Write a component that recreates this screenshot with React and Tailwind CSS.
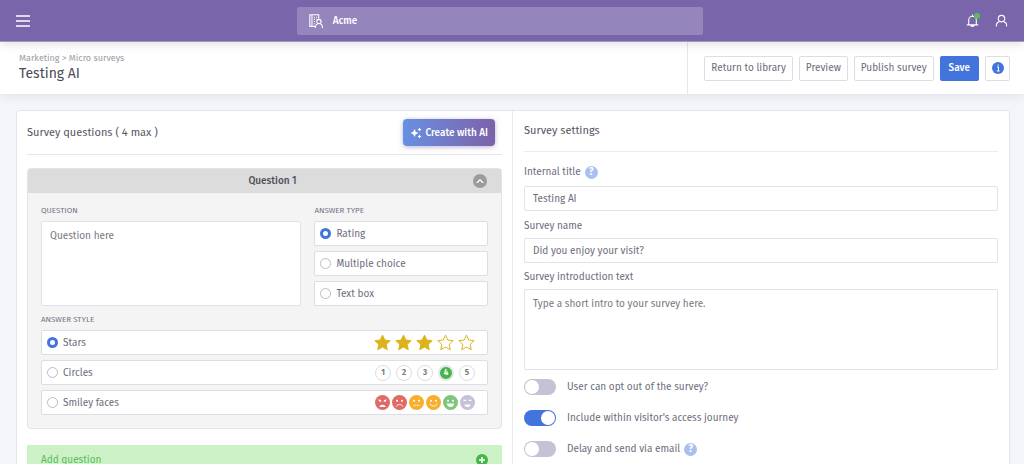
import React, { useState } from "react";

const ANSWER_TYPES = ["Rating", "Multiple choice", "Text box"];

const FACES = [
  { color: "#df6a66", kind: "angry" },
  { color: "#df6a66", kind: "sad" },
  { color: "#f6b02e", kind: "neutral" },
  { color: "#f6b02e", kind: "smile" },
  { color: "#7fc67b", kind: "grin" },
  { color: "#c5c2d8", kind: "love" },
];

function UserIcon({ className }) {
  return (
    <svg viewBox="0 0 24 24" fill="none" stroke="currentColor" strokeWidth="2" className={className}>
      <circle cx="12" cy="8.5" r="6" />
      <path d="M2.500 23v-2.500c0-3.500 2.500-5.500 6-6.500M21.500 23v-2.500c0-3.500-2.500-5.500-6-6.500" />
    </svg>
  );
}

function BellIcon() {
  return (
    <svg viewBox="0 0 24 24" fill="none" stroke="currentColor" strokeWidth="2" className="size-[13px]">
      <path d="M5 19V11a7 7 0 0 1 14 0v8M1.500 20h21M12 1v3" />
      <path d="M9 20.500a3 2.500 0 0 0 6 0" fill="currentColor" />
    </svg>
  );
}

function AccountIcon() {
  return (
    <svg viewBox="0 0 26 26" fill="none" stroke="currentColor" strokeWidth="2" className="size-[14px]">
      <path d="M18 9V1.500H1.500V23H11" />
      <path d="M5.500 2v21M9 6h2M13 6h2M9 10h2M13 10h1M9 14h2M9 18h2" />
      <circle cx="18.500" cy="14" r="4" />
      <path d="M12 26v-2.500c0-3 2-4.500 4-5.500M25 26v-2.500c0-3-2-4.500-4-5.500" />
    </svg>
  );
}

function SparklesIcon() {
  return (
    <svg viewBox="0 0 24 24" fill="currentColor" className="size-3">
      <path d="M9 4l2.500 5.500L17 12l-5.500 2.500L9 20l-2.500-5.500L1 12l5.500-2.500z" />
      <path d="M19 1l1.300 2.700L23 5l-2.700 1.300L19 9l-1.300-2.700L15 5l2.700-1.300z" />
      <path d="M19 15l1.300 2.700L23 19l-2.700 1.300L19 23l-1.300-2.700L15 19l2.700-1.300z" />
    </svg>
  );
}

function HelpIcon() {
  return (
    <button
      type="button"
      aria-label="Help"
      className="flex size-[13px] shrink-0 items-center justify-center rounded-full bg-[#a9bff0] text-[10px] leading-none font-bold text-white"
    >
      ?
    </button>
  );
}

function Star({ filled }) {
  return (
    <svg viewBox="0 0 24 24" fill={filled ? "#dcb31a" : "none"} stroke="#dcb31a" strokeWidth="1.4" className="size-[17px]">
      <path d="M12 1.500l3.200 7 7.600.9-5.600 5.200 1.500 7.600L12 18.400l-6.700 3.800 1.500-7.600L1.200 9.400l7.600-.9z" />
    </svg>
  );
}

function Stars() {
  return (
    <span className="flex gap-1">
      {[1, 2, 3, 4, 5].map((n) => (
        <Star key={n} filled={n <= 3} />
      ))}
    </span>
  );
}

function Circles() {
  return (
    <span className="flex gap-[5px]">
      {[1, 2, 3, 4, 5].map((n) => (
        <span
          key={n}
          className={
            n === 4
              ? "flex size-4 items-center justify-center rounded-full border-2 border-[#e6e6ea] bg-[#43b649] text-[8px] font-bold text-white"
              : "flex size-4 items-center justify-center rounded-full border border-[#dddde0] bg-white text-[8px] font-bold text-[#777]"
          }
        >
          {n}
        </span>
      ))}
    </span>
  );
}

function Face({ color, kind }) {
  return (
    <svg viewBox="0 0 24 24" fill="none" stroke="#fff" strokeWidth="1.6" strokeLinecap="round" className="size-[15px]">
      <circle cx="12" cy="12" r="12" fill={color} stroke="none" />
      {kind === "love" ? (
        <path d="M5 7.500h5.500c0 3-5.500 3-5.500 0zM13.500 7.500h5.500c0 3-5.500 3-5.500 0z" fill="#fff" stroke="none" />
      ) : (
        <g fill="#fff" stroke="none">
          <circle cx="8" cy="9" r="1.600" />
          <circle cx="16" cy="9" r="1.600" />
        </g>
      )}
      {kind === "angry" && (
        <>
          <path d="M6 8l3.500 1.500M18 8l-3.500 1.500" />
          <path d="M7 19c1-4.500 9-4.500 10 0z" fill="#fff" stroke="none" />
        </>
      )}
      {kind === "sad" && <path d="M7 18c2-4 8-4 10 0" />}
      {kind === "neutral" && <path d="M7.500 16.500h9" opacity="0.7" />}
      {kind === "smile" && <path d="M6.500 14.500c2 4.500 9 4.500 11 0" />}
      {kind === "grin" && <path d="M6 13.500h12c-1 7.500-11 7.500-12 0z" fill="#fff" stroke="none" />}
      {kind === "love" && <path d="M7 15h10c-1 5.500-9 5.500-10 0z" fill="#fff" stroke="none" />}
    </svg>
  );
}

function Faces() {
  return (
    <span className="flex gap-[2px]">
      {FACES.map((face) => (
        <Face key={face.kind} color={face.color} kind={face.kind} />
      ))}
    </span>
  );
}

const ANSWER_STYLES = [
  { name: "Stars", preview: <Stars /> },
  { name: "Circles", preview: <Circles /> },
  { name: "Smiley faces", preview: <Faces /> },
];

function RadioRow({ group, label, checked, onChange, children }) {
  return (
    <label className="flex h-[25px] cursor-pointer items-center rounded-xs border border-[#dddde6] bg-white pr-3 pl-[5px]">
      <input
        type="radio"
        name={group}
        checked={checked}
        onChange={onChange}
        className="mr-[5px] size-[11px] appearance-none rounded-full border border-[#bdbdc2] bg-white checked:border-3 checked:border-[#4374dc]"
      />
      <span className="flex-1">{label}</span>
      {children}
    </label>
  );
}

function Toggle({ id, label, checked, onChange, help }) {
  return (
    <div className="flex items-center">
      <input
        id={id}
        type="checkbox"
        role="switch"
        checked={checked}
        onChange={onChange}
        className="mr-[11px] flex h-4 w-8 appearance-none items-center rounded-full bg-[#c5c2d6] px-px before:size-[14px] before:rounded-full before:bg-white checked:justify-end checked:bg-[#4374dc]"
      />
      <label htmlFor={id} className="mr-1">{label}</label>
      {help && <HelpIcon />}
    </div>
  );
}

const subHeading = "mb-1 block text-[8px] leading-3 text-[#737386] uppercase";
const toolButton = "h-[25px] rounded-xs border border-[#dddde6] bg-white px-[6px] whitespace-nowrap";
const field = "block w-full rounded-xs border border-[#e2e2e9] bg-white px-2 outline-none placeholder:text-[#777780]";

function App() {
  const [answerType, setAnswerType] = useState("Rating");
  const [answerStyle, setAnswerStyle] = useState("Stars");
  const [title, setTitle] = useState("Testing AI");
  const [name, setName] = useState("Did you enjoy your visit?");
  const [optOut, setOptOut] = useState(false);
  const [journey, setJourney] = useState(true);
  const [delay, setDelay] = useState(false);

  return (
    <div className="flex h-screen flex-col bg-[#f4f5fa] font-['Fira_Sans','Noto_Sans',sans-serif] text-[10px] leading-4 text-[#6c6c7c]">
      <header className="z-20 flex h-[42px] shrink-0 items-center justify-between border-b border-[#a497c6] bg-[#7966aa] px-4 text-white shadow-[0_2px_10px_rgba(0,0,0,0.12)]">
        <button type="button" aria-label="Menu" className="mr-1">
          <svg viewBox="0 0 14 12" stroke="currentColor" strokeWidth="1.500" className="w-[14px]">
            <path d="M0 1h14M0 6h14M0 11h14" />
          </svg>
        </button>
        <button type="button" className="flex h-7 w-[41%] items-center gap-[10px] rounded-xs bg-[#9486bd] px-3 font-medium">
          <AccountIcon />
          Acme
        </button>
        <div className="flex gap-4">
          <button type="button" aria-label="Notifications" className="relative">
            <BellIcon />
            <span className="absolute -top-px -right-px size-[6px] rounded-full bg-[#55bd58]" />
          </button>
          <button type="button" aria-label="Profile">
            <UserIcon className="size-[13px]" />
          </button>
        </div>
      </header>

      <div className="z-10 flex h-[52px] shrink-0 bg-white shadow-[0_2px_10px_rgba(0,0,0,0.08)]">
        <div className="flex-1 pt-[10px] pl-[19px]">
          <nav className="text-[9px] leading-3 text-[#9a9aa5]">
            <a href="#marketing">Marketing</a> &gt; <a href="#surveys">Micro surveys</a>
          </nav>
          <h1 className="text-[14px] leading-5 text-[#4b4b57]">Testing AI</h1>
        </div>
        <div className="flex items-center gap-[6px] border-l border-[#e6e6ee] pr-[14px] pl-4">
          <button type="button" className={toolButton}>Return to library</button>
          <button type="button" className={toolButton}>Preview</button>
          <button type="button" className={toolButton}>Publish survey</button>
          <button type="button" className="h-[25px] rounded-xs bg-[#4374dc] px-[9px] font-medium text-white">Save</button>
          <button type="button" aria-label="Information" className="flex size-[25px] items-center justify-center rounded-xs border border-[#dddde6]">
            <svg viewBox="0 0 12 12" className="size-3">
              <circle cx="6" cy="6" r="6" fill="#4374dc" />
              <path d="M5 5h1.500v4M4.800 9h2.800M6.200 2.500v1.300" stroke="#fff" strokeWidth="1" fill="none" />
            </svg>
          </button>
        </div>
      </div>

      <main className="flex-1 overflow-y-auto pt-4 pr-[14px] pl-4 [scrollbar-width:none]">
        <div className="grid grid-cols-2 rounded-sm border border-[#e4e4ed] bg-white">
          <section className="border-r border-[#e9e9f0] px-[10px] pb-4">
            <div className="flex h-11 items-center justify-between border-b border-[#e6e6ea] pr-[7px]">
              <h2 className="text-[11px] text-[#55555f]">Survey questions ( 4 max )</h2>
              <button
                type="button"
                className="flex h-[27px] items-center gap-[3px] rounded-sm bg-linear-to-r from-[#6690e2] to-[#7b62a8] px-[7px] font-medium text-white shadow-[0_1px_5px_rgba(121,102,170,0.5)]"
              >
                <SparklesIcon />
                Create with AI
              </button>
            </div>

            <div className="mt-[13px] rounded-sm border border-[#e4e4e6] bg-[#f4f4f4]">
              <div className="flex h-6 items-center bg-[#dcdcdc] pr-[14px] pl-11">
                <h3 className="flex-1 text-center font-medium text-[#4f4f5a]">Question 1</h3>
                <button
                  type="button"
                  aria-label="Collapse question"
                  className="flex size-[14px] items-center justify-center rounded-full bg-[#9b9b9b]"
                >
                  <svg viewBox="0 0 10 6" fill="none" stroke="#fff" strokeWidth="1.600" className="w-2">
                    <path d="M1 5l4-4 4 4" />
                  </svg>
                </button>
              </div>

              <div className="px-[13px] pt-3 pb-[13px]">
                <div className="grid grid-cols-[3fr_2fr] gap-[13px]">
                  <div className="flex flex-col">
                    <label htmlFor="question" className={subHeading}>Question</label>
                    <textarea id="question" placeholder="Question here" className={`${field} flex-1 resize-none py-[6px]`} />
                  </div>
                  <fieldset>
                    <legend className={subHeading}>Answer type</legend>
                    <div className="flex flex-col gap-[5px]">
                      {ANSWER_TYPES.map((type) => (
                        <RadioRow
                          key={type}
                          group="answer-type"
                          label={type}
                          checked={answerType === type}
                          onChange={() => setAnswerType(type)}
                        />
                      ))}
                    </div>
                  </fieldset>
                </div>

                <fieldset className="mt-2">
                  <legend className={subHeading}>Answer style</legend>
                  <div className="flex flex-col gap-[5px]">
                    {ANSWER_STYLES.map((style) => (
                      <RadioRow
                        key={style.name}
                        group="answer-style"
                        label={style.name}
                        checked={answerStyle === style.name}
                        onChange={() => setAnswerStyle(style.name)}
                      >
                        {style.preview}
                      </RadioRow>
                    ))}
                  </div>
                </fieldset>
              </div>
            </div>

            <button type="button" className="mt-4 flex h-[30px] w-full items-center justify-between rounded-xs bg-[#ccf1c7] px-[14px] text-[#55bd58]">
              Add question
              <svg viewBox="0 0 12 12" className="size-3">
                <circle cx="6" cy="6" r="6" fill="#43b649" />
                <path d="M6 3v6M3 6h6" stroke="#fff" strokeWidth="1.600" />
              </svg>
            </button>
          </section>

          <section className="px-[11px]">
            <h2 className="flex h-[41px] items-center border-b border-[#ebebef] text-[11px] text-[#55555f]">Survey settings</h2>
            <div className="mt-3 mb-[6px] flex items-center gap-1">
              <label htmlFor="title">Internal title</label>
              <HelpIcon />
            </div>
            <input id="title" value={title} onChange={(e) => setTitle(e.target.value)} className={`${field} h-[25px]`} />
            <label htmlFor="name" className="mt-[7px] mb-1 block">Survey name</label>
            <input id="name" value={name} onChange={(e) => setName(e.target.value)} className={`${field} h-[25px]`} />
            <label htmlFor="intro" className="mt-[6px] mb-1 block">Survey introduction text</label>
            <textarea
              id="intro"
              placeholder="Type a short intro to your survey here."
              className={`${field} h-[81px] resize-none py-[6px]`}
            />
            <div className="mt-[9px] mb-4 flex flex-col gap-[15px]">
              <Toggle id="opt-out" label="User can opt out of the survey?" checked={optOut} onChange={() => setOptOut(!optOut)} />
              <Toggle id="journey" label="Include within visitor's access journey" checked={journey} onChange={() => setJourney(!journey)} />
              <Toggle id="delay" label="Delay and send via email" checked={delay} onChange={() => setDelay(!delay)} help />
            </div>
          </section>
        </div>
      </main>
    </div>
  );
}

export default App;
